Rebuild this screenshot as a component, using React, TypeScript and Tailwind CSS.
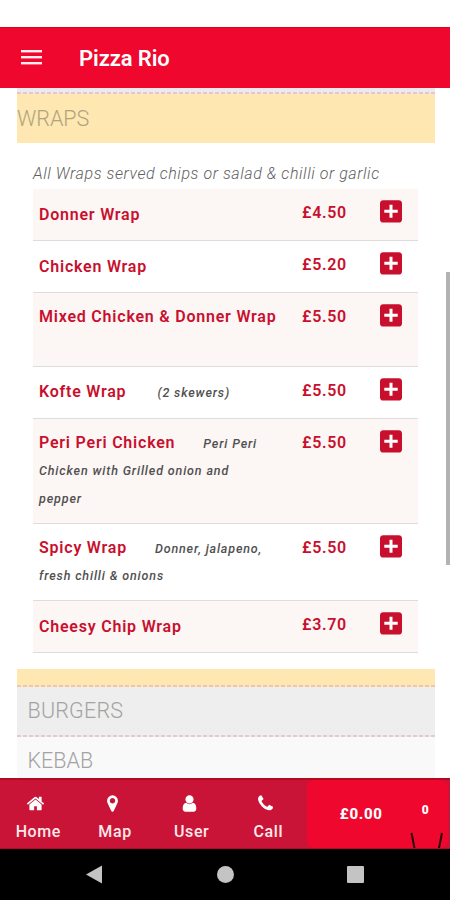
import React from "react";

type Item = {
  name: string;
  price: string;
  row: string;
  label?: string;
  cost?: string;
  gap?: string;
  first?: string;
  rest?: string[];
};

const items: Item[] = [
  { name: "Donner Wrap", price: "£4.50", row: "h-[52px] bg-[#fcf6f5]", label: "pt-[4px]" },
  { name: "Chicken Wrap", price: "£5.20", row: "h-[52px] bg-white", label: "pt-[4px]", cost: "pt-[1px]" },
  { name: "Mixed Chicken & Donner Wrap", price: "£5.50", row: "h-[74px] bg-[#fcf6f5]" },
  { name: "Kofte Wrap", price: "£5.50", row: "h-[52px] bg-white", label: "pt-[2px]", gap: "ml-[31px]", first: "(2 skewers)" },
  {
    name: "Peri Peri Chicken",
    price: "£5.50",
    row: "h-[105px] bg-[#fcf6f5]",
    gap: "ml-[28px]",
    first: "Peri Peri",
    rest: ["Chicken with Grilled onion and", "pepper"],
  },
  {
    name: "Spicy Wrap",
    price: "£5.50",
    row: "h-[77px] bg-white",
    gap: "ml-[28px]",
    first: "Donner, jalapeno,",
    rest: ["fresh chilli & onions"],
  },
  { name: "Cheesy Chip Wrap", price: "£3.70", row: "h-[52px] bg-[#fcf6f5]", label: "pt-[4px]" },
];

const tabs = [
  {
    label: "Home",
    d: "M1472 992v480q0 26-19 45t-45 19h-384v-384h-256v384h-384q-26 0-45-19t-19-45v-480q0-1 .5-3t.5-3l575-474 575 474q1 2 1 6zm223-69l-62 74q-8 9-21 11h-3q-13 0-21-7l-692-577-692 577q-12 8-24 7-13-2-21-11l-62-74q-8-10-7-23.5t11-21.5l719-599q32-26 76-26t76 26l244 204v-195q0-14 9-23t23-9h192q14 0 23 9t9 23v408l219 182q10 8 11 21.5t-7 23.5z",
  },
  {
    label: "Map",
    d: "M1152 640q0-106-75-181t-181-75-181 75-75 181 75 181 181 75 181-75 75-181zm256 0q0 109-33 179l-364 774q-16 33-47.5 52t-67.5 19-67.5-19-46.5-52l-365-774q-33-70-33-179 0-212 150-362t362-150 362 150 150 362z",
  },
  {
    label: "User",
    d: "M1536 1399q0 109-62.5 187t-150.5 78h-854q-88 0-150.5-78t-62.5-187q0-85 8.5-160.5t31.5-152 58.5-131 94-89 134.5-34.5q131 128 313 128t313-128q76 0 134.5 34.5t94 89 58.5 131 31.5 152 8.5 160.5zm-256-887q0 159-112.5 271.5t-271.5 112.5-271.5-112.5-112.5-271.5 112.5-271.5 271.5-112.5 271.5 112.5 112.5 271.5z",
  },
  {
    label: "Call",
    d: "M1600 1240q0 27-10 70.5t-21 68.5q-21 50-122 106-94 51-186 51-27 0-53-3.5t-57.5-12.5-47-14.5-55.5-20.5-49-18q-98-35-175-83-127-79-264-216t-216-264q-48-77-83-175-3-9-18-49t-20.5-55.5-14.5-47-12.5-57.5-3.5-53q0-92 51-186 56-101 106-122 25-11 68.5-21t70.5-10q14 0 21 3 18 6 53 76 11 19 30 54t35 63.5 31 53.5q3 4 17.5 25t21.5 35.5 7 28.5q0 20-28.5 50t-62 55-62 53-28.5 46q0 9 5 22.5t8.5 20.5 14 24 11.5 19q76 137 174 235t235 174q2 1 19 11.5t24 14 20.5 8.5 22.5 5q18 0 46-28.5t53-62 55-62 50-28.5q14 0 28.5 7t35.5 21.5 25 17.5q25 15 53.5 31t63.5 35 54 30q70 35 76 53 3 7 3 21z",
  },
];

function PlusSquare() {
  return (
    <svg className="mt-[12px] h-[23px] w-[23px] shrink-0" viewBox="0 0 23 23">
      <rect x="0" y="0.2" width="22" height="22.4" rx="3.4" fill="#c8102e" />
      <path d="M9.500 4.700h3v5h5.200v3h-5.200v5h-3v-5H4.300v-3h5.200z" fill="#fff" />
    </svg>
  );
}

function MenuRow({ item }: { item: Item }) {
  return (
    <div className={`flex border-b-[1.5px] border-[#dfdcdd] pl-[6px] ${item.row}`}>
      <div className="w-[263px] shrink-0 whitespace-nowrap">
        <div className={`flex h-[47px] items-center ${item.label ?? ""}`}>
          <span className="text-[16px] font-semibold tracking-[0.78px] text-[#c8102e]">{item.name}</span>
          {item.first && (
            <span className={`pt-[3px] text-[12.5px] font-medium italic tracking-[0.84px] text-[#505050] ${item.gap}`}>
              {item.first}
            </span>
          )}
        </div>
        {item.rest && (
          <div className="-mt-[9px]">
            {item.rest.map((line) => (
              <div key={line} className="h-7 text-[12.5px] font-medium italic leading-7 tracking-[0.86px] text-[#505050]">
                {line}
              </div>
            ))}
          </div>
        )}
      </div>
      <div className="-mt-px flex">
        <div
          className={`flex h-[49px] w-[78px] items-center text-[16px] font-semibold tracking-[0.7px] text-[#c8102e] ${item.cost ?? ""}`}
        >
          {item.price}
        </div>
        <PlusSquare />
      </div>
    </div>
  );
}

function Dashes({ tone }: { tone: string }) {
  return (
    <svg className={`block h-[2px] w-full ${tone}`}>
      <line x1="0" y1="1" x2="418" y2="1" stroke="#dca3b2" strokeWidth="1.2" strokeDasharray="4 2" />
    </svg>
  );
}

export default function App() {
  return (
    <div className="flex h-[900px] w-[450px] flex-col overflow-hidden bg-white font-[Roboto,'Liberation_Sans',sans-serif]">
      <div className="h-[27px] shrink-0 bg-white" />
      <header className="flex h-[61px] shrink-0 items-center border-t border-[#d9041f] bg-[#ef072d] pl-[21px] text-white">
        <svg className="-mt-[2px] h-4 w-[21px]" viewBox="0 0 21 16" fill="#ffeef0">
          <rect y="1" width="21" height="2.4" />
          <rect y="7" width="21" height="2.4" />
          <rect y="13" width="21" height="2.4" />
        </svg>
        <h1 className="ml-[37px] text-[22px] font-semibold tracking-[-0.1px]">Pizza Rio</h1>
      </header>

      <main className="flex h-[690px] shrink-0 overflow-hidden">
        <div className="ml-[17px] w-[418px] shrink-0">
          <div className="h-1 bg-[#eee9ed]" />
          <Dashes tone="bg-[#eee9ed]" />
          <div className="flex h-[49px] items-center bg-[#fee7b1] pt-px text-[21.5px] font-light text-[#b0a47e]">
            WRAPS
          </div>
          <p className="ml-4 mt-[18px] h-[28px] whitespace-nowrap text-[16px] font-light italic leading-[26px] tracking-[0.57px] text-[#606060]">
            All Wraps served chips or salad &amp; chilli or garlic
          </p>
          <div className="ml-4 w-[385px]">
            {items.map((item) => (
              <MenuRow key={item.name} item={item} />
            ))}
          </div>
          <div className="mt-4 h-4 bg-[#fee7b1]" />
          <Dashes tone="bg-[#fee7b1]" />
          <div className="flex h-[48px] items-center bg-[#eeeeee] pl-[10.5px] pt-px text-[21.5px] font-light tracking-[0.2px] text-[#a3a3a3]">
            BURGERS
          </div>
          <Dashes tone="bg-[#eeeeee]" />
          <div className="flex h-[48px] items-center bg-[#f9f9f9] pl-[10.5px] pt-px text-[21.5px] font-light text-[#a3a3a3]">
            KEBAB
          </div>
        </div>
        <div className="ml-[11px] mt-[184px] h-[293px] w-1 bg-[#b3b3b3]" />
      </main>

      <footer className="flex h-[71px] shrink-0 border-b border-t-2 border-[#b4091f] bg-[#c91437] text-white">
        <nav className="flex">
          {tabs.map((tab) => (
            <div key={tab.label} className="flex w-[76.7px] flex-col items-center pt-[14px]">
              <svg className="-ml-[5px] h-[19px] w-[19px]" viewBox="0 0 1792 1792" fill="#fff">
                <path d={tab.d} />
              </svg>
              <span className="mt-[8px] text-[16px] font-medium leading-[22px] tracking-[0.6px] text-[#ffe9e9]">
                {tab.label}
              </span>
            </div>
          ))}
        </nav>
        <div className="flex w-[141px] rounded-[7px] bg-[#ef072d]">
          <span className="ml-[33px] mt-[24px] w-[82px] text-[15px] font-extrabold leading-5 tracking-[0.7px]">£0.00</span>
          <div className="flex flex-col">
            <span className="mt-[21px] text-[12px] font-black leading-[18px]">0</span>
            <svg className="-ml-[12px] mt-[13px] h-4 w-[34px]" viewBox="0 0 34 16" fill="none" stroke="#25050a" strokeWidth="2">
              <path d="M1.500 1l3.200 16M32 1l-3.200 16" />
            </svg>
          </div>
        </div>
      </footer>

      <div className="h-[51px] shrink-0 bg-black">
        <svg className="block h-[51px] w-[450px]" fill="#c4c4c4">
          <path d="M86 25.500L102 16.500v18z" />
          <circle cx="225.500" cy="25.500" r="8.500" />
          <rect x="347" y="17" width="17" height="17" rx="1" />
        </svg>
      </div>
    </div>
  );
}
